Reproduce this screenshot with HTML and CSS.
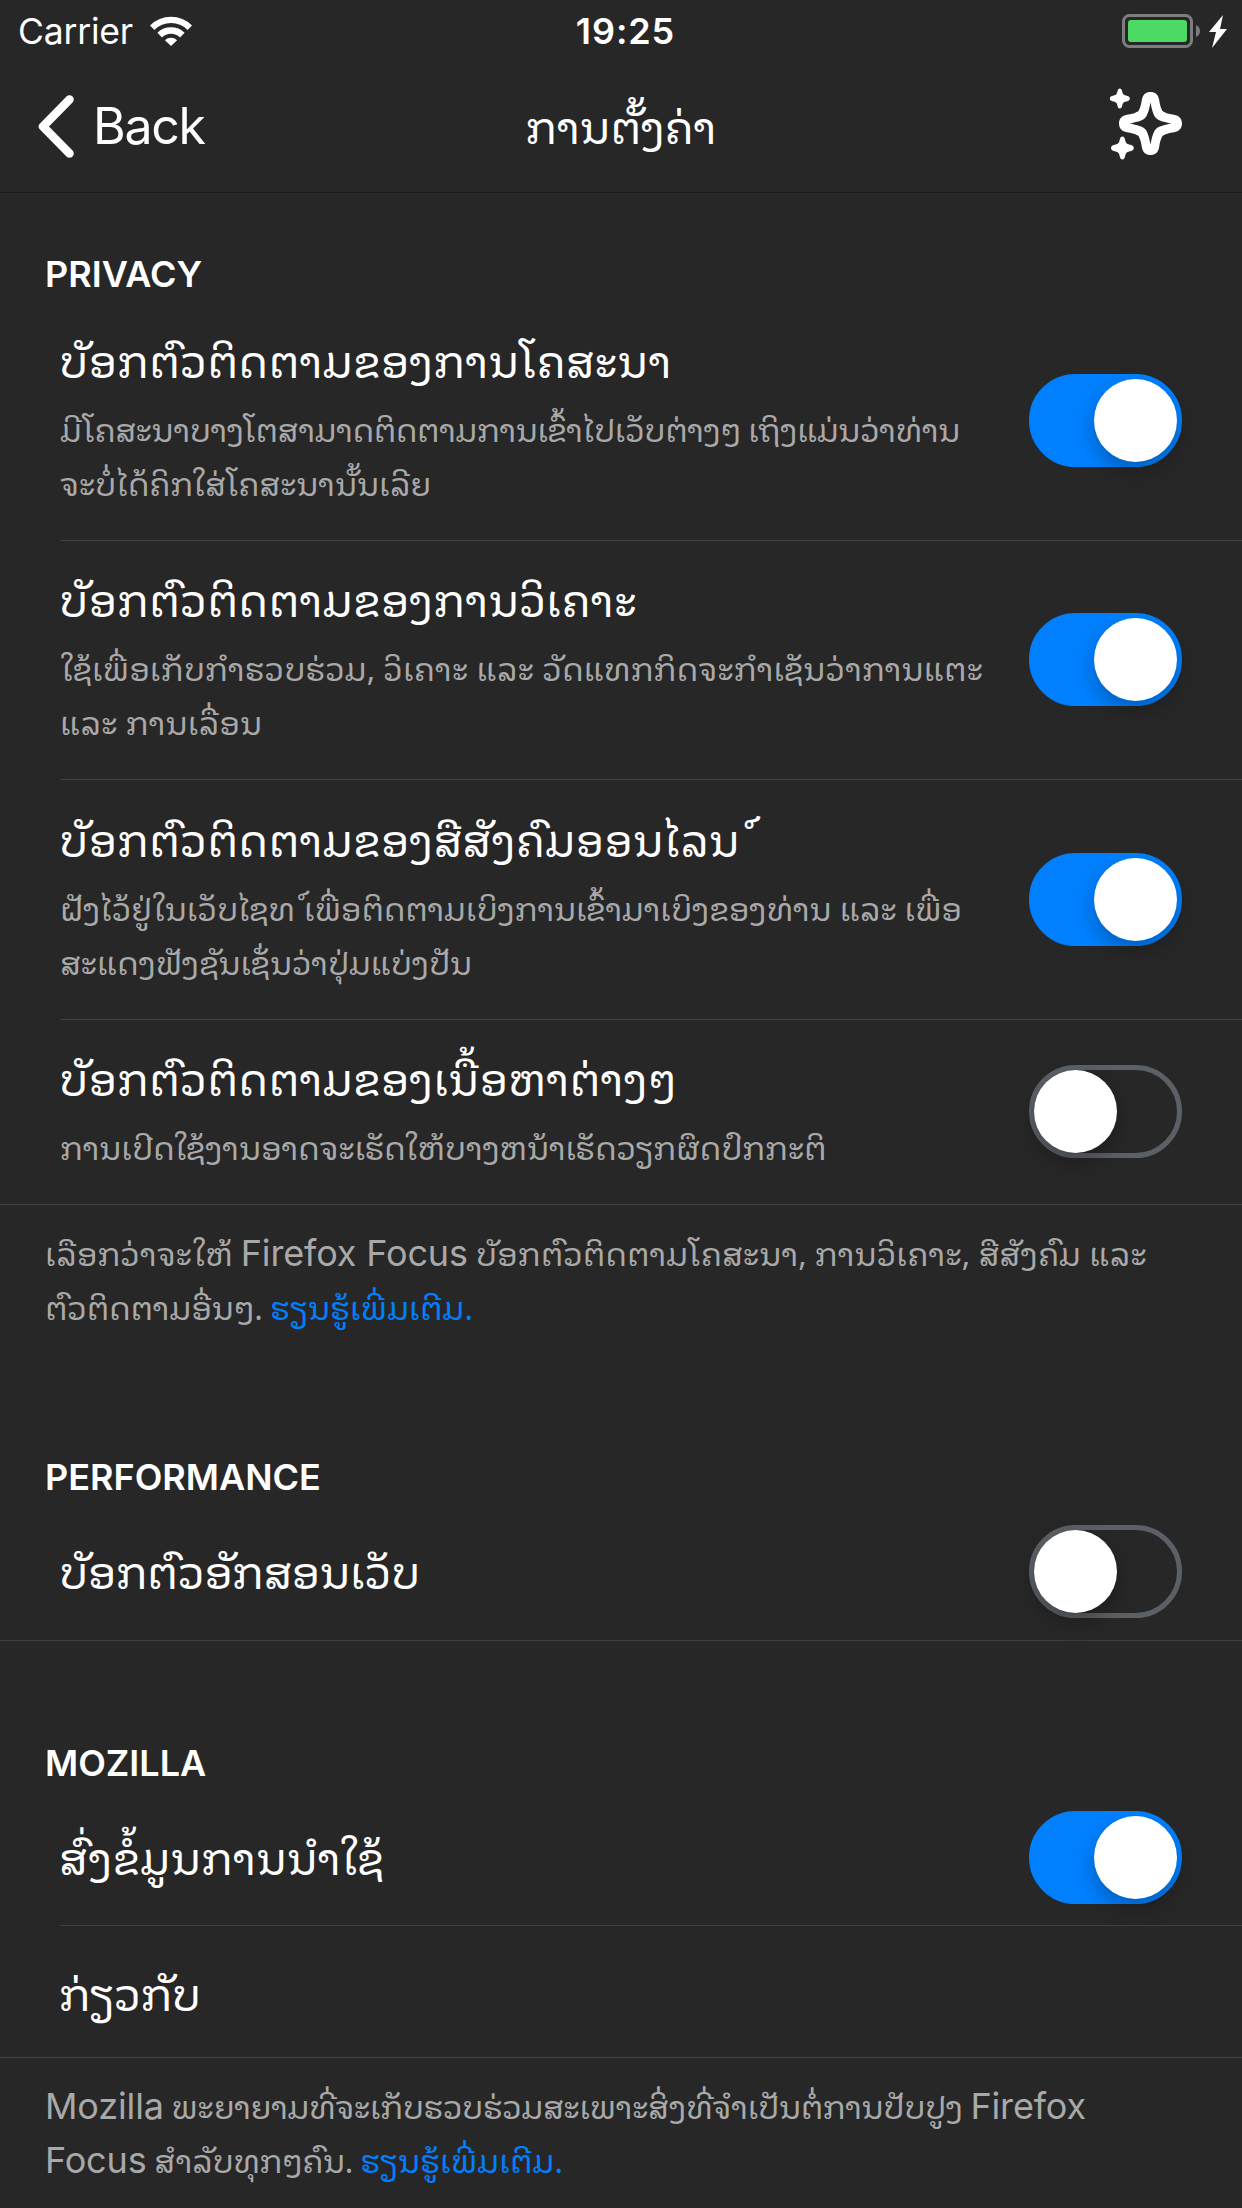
FILE: index.html
```html
<!DOCTYPE html>
<html lang="lo">
<head>
<meta charset="utf-8">
<title>ການຕັ້ງຄ່າ</title>
<link rel="stylesheet" href="styles.css">
</head>
<body>
<header class="top">
  <div class="status">
    <div class="carrier"><span>Carrier</span>
      <svg class="wifi" viewBox="0 0 42 30"><path d="M0 9.400A29.600 29.600 0 0 1 42 9.400L37.600 13.900A23.400 23.400 0 0 0 4.400 13.900Z"/><path d="M7.400 16.800A19.200 19.200 0 0 1 34.600 16.800L30 21.400A12.700 12.700 0 0 0 12 21.400Z"/><path d="M14.900 24.200A8.800 8.800 0 0 1 27.100 24.200L21 30Z"/></svg>
    </div>
    <div class="clock">19:25</div>
    <svg class="battery" viewBox="0 0 106 34"><rect x="1.5" y="1.5" width="68" height="31" rx="6" fill="none" stroke="#7d7d7d" stroke-width="3"/><rect x="6" y="6" width="59" height="22" rx="3" fill="#4cd964"/><path d="M74 11q4 2 4 6t-4 6z" fill="#7d7d7d"/><path d="M101 1 87 18h7l-4 16 15-19h-7z" fill="#fff"/></svg>
  </div>
  <nav class="nav">
    <div class="back"><svg class="chevron" viewBox="0 0 36 63"><path d="M31.500 4.500 5 31.500 31.500 58.500"/></svg><span>Back</span></div>
    <h1 class="nav-title">ການຕັ້ງຄ່າ</h1>
    <svg class="sparkle" viewBox="0 0 75 73">
      <g transform="translate(41.5 35.5)" fill-rule="evenodd"><path d="M0-31.500C4.500-31.500 7.500-29 8.500-24.500C9.500-18 10.500-15 12-12.500C15-10.500 18-9.500 24.500-8.500C29-7.500 31.500-4.500 31.500 0S29 7.500 24.500 8.500C18 9.500 15 10.500 12 12.500C10.500 15 9.500 18 8.500 24.500C7.500 29 4.500 31.500 0 31.500S-7.500 29-8.500 24.500C-9.500 18-10.500 15-12 12.500C-15 10.500-18 9.500-24.500 8.500C-29 7.500-31.500 4.500-31.500 0S-29-7.500-24.500-8.500C-18-9.500-15-10.500-12-12.500C-10.500-15-9.500-18-8.500-24.500C-7.500-29-4.500-31.500 0-31.500ZM0-21C1.500-13 3-8 5.500-5.500C8-3 13-1.500 21 0C13 1.500 8 3 5.500 5.500C3 8 1.500 13 0 21C-1.500 13-3 8-5.500 5.500C-8 3-13 1.500-21 0C-13-1.500-8-3-5.500-5.500C-3-8-1.500-13 0-21Z"/></g>
      <path transform="translate(10.800 10.500)" d="M0-10Q2-10 2.500-6.500Q3-3.500 6-3Q10-2.500 10 0T6 3Q3 3.500 2.500 6.500Q2 10 0 10T-2.500 6.500Q-3 3.500-6 3Q-10 2.500-10 0T-6-3Q-3-3.500-2.500-6.500Q-2-10 0-10Z"/>
      <path transform="translate(13.400 60) scale(1.140)" d="M0-10Q2-10 2.500-6.500Q3-3.500 6-3Q10-2.500 10 0T6 3Q3 3.500 2.500 6.500Q2 10 0 10T-2.500 6.500Q-3 3.500-6 3Q-10 2.500-10 0T-6-3Q-3-3.500-2.500-6.500Q-2-10 0-10Z"/>
    </svg>
  </nav>
</header>
<main>
  <section>
    <h2>PRIVACY</h2>
    <div class="row tall">
      <div class="label">
        <p class="title">ບັອກຕົວຕິດຕາມຂອງການໂຄສະນາ</p>
        <p class="detail tight">ມີໂຄສະນາບາງໂຕສາມາດຕິດຕາມການເຂົ້າໄປເວັບຕ່າງໆ ເຖິງແມ່ນວ່າທ່ານ<br><span class="even">ຈະບໍ່ໄດ້ຄິກໃສ່ໂຄສະນານັ້ນເລີຍ</span></p>
      </div>
      <span class="switch on"></span>
    </div>
    <div class="row tall">
      <div class="label">
        <p class="title">ບັອກຕົວຕິດຕາມຂອງການວິເຄາະ</p>
        <p class="detail loose">ໃຊ້ເພື່ອເກັບກຳຮວບຮ່ວມ, ວິເຄາະ ແລະ ວັດແທກກິດຈະກຳເຊັນວ່າການແຕະ<br>ແລະ ການເລື່ອນ</p>
      </div>
      <span class="switch on"></span>
    </div>
    <div class="row tall">
      <div class="label">
        <p class="title">ບັອກຕົວຕິດຕາມຂອງສືສັງຄົມອອນໄລນ<span class="mark-gap">&nbsp;</span>໌</p>
        <p class="detail">ຝັງໄວ້ຢູ່ໃນເວັບໄຊທ<span class="mark-gap">&nbsp;</span>໌ ເພື່ອຕິດຕາມເບິງການເຂົ້າມາເບິງຂອງທ່ານ ແລະ ເພື່ອ<br>ສະແດງຟັງຊັນເຊັ່ນວ່າປຸ່ມແບ່ງປັນ</p>
      </div>
      <span class="switch on"></span>
    </div>
    <div class="row mid last">
      <div class="label">
        <p class="title">ບັອກຕົວຕິດຕາມຂອງເນື້ອຫາຕ່າງໆ</p>
        <p class="detail">ການເປີດໃຊ້ງານອາດຈະເຮັດໃຫ້ບາງຫນ້າເຮັດວຽກຜຶດປົກກະຕິ</p>
      </div>
      <span class="switch"></span>
    </div>
    <p class="note"><span class="loose">ເລືອກວ່າຈະໃຫ້</span> <span class="latin">Firefox Focus</span> <span class="loose">ບັອກຕົວຕິດຕາມໂຄສະນາ, ການວິເຄາະ, ສືສັງຄົມ ແລະ</span><br>ຕົວຕິດຕາມອື່ນໆ. <a class="loose">ຮຽນຮູ້ເພີ່ມເຕີມ.</a></p>
  </section>
  <section class="performance">
    <h2>PERFORMANCE</h2>
    <div class="row short last">
      <div class="label"><p class="title tight">ບັອກຕົວອັກສອນເວັບ</p></div>
      <span class="switch"></span>
    </div>
  </section>
  <section>
    <h2>MOZILLA</h2>
    <div class="row short">
      <div class="label"><p class="title">ສົ່ງຂໍ້ມູນການນຳໃຊ້</p></div>
      <span class="switch on"></span>
    </div>
    <div class="row plain last">
      <div class="label"><p class="title tight">ກ່ຽວກັບ</p></div>
    </div>
    <p class="note tight"><span class="latin">Mozilla</span> ພະຍາຍາມທີ່ຈະເກັບຮວບຮ່ວມສະເພາະສິ່ງທີ່ຈຳເປັນຕໍ່ການປັບປູງ <span class="latin">Firefox</span><br><span class="latin">Focus</span> ສຳລັບທຸກໆຄົນ. <a class="loose">ຮຽນຮູ້ເພີ່ມເຕີມ.</a></p>
  </section>
</main>
</body>
</html>
```
FILE: styles.css
```css
body {
  margin: 0;
  background: #272727;
  color: #fff;
  font-family: Inter, sans-serif;
}

p, h1, h2 {
  margin: 0;
  font-weight: 400;
}

.top {
  box-sizing: border-box;
  height: 193px;
  border-bottom: 1px solid #1b1b1b;
}

.status {
  display: grid;
  grid-template-columns: 1fr auto 1fr;
  align-items: center;
  height: 61px;
  padding: 0 14px 0 18px;
  font-size: 35.5px;
}

.carrier {
  display: flex;
  align-items: center;
  gap: 17px;
  letter-spacing: -.2px;
}

.carrier span { padding-top: 2px; }

.clock {
  padding: 1px 0 0 5px;
  font-size: 36px;
  font-weight: 600;
  letter-spacing: .9px;
}

.wifi {
  width: 42px;
  height: 30px;
  fill: #fff;
}

.battery {
  width: 106px;
  height: 34px;
  justify-self: end;
}

.nav {
  display: grid;
  grid-template-columns: 1fr auto 1fr;
  align-items: center;
  height: 130px;
  padding: 0 38px;
  font-size: 50px;
}

.back {
  display: flex;
  align-items: center;
  gap: 19px;
  letter-spacing: -.025em;
}

.chevron {
  width: 36px;
  height: 63px;
  fill: none;
  stroke: #fff;
  stroke-width: 8.5;
  stroke-linecap: round;
  stroke-linejoin: round;
}

.nav-title, .title, .detail, .note {
  font-family: "Noto Sans Lao Looped", "DejaVu Sans", sans-serif;
  white-space: nowrap;
}

.nav-title {
  padding-bottom: 5px;
  font-size: 44px;
  line-height: 60px;
  letter-spacing: -.4px;
}

.sparkle {
  width: 75px;
  height: 73px;
  margin: 0 20px 3px 0;
  justify-self: end;
  fill: #fff;
}

h2 {
  padding: 59px 0 5px 45px;
  font-size: 36px;
  font-weight: 600;
  line-height: 44px;
}

.row {
  display: flex;
  align-items: center;
  justify-content: space-between;
  box-sizing: border-box;
  margin-left: 60px;
  padding-right: 60px;
  border-bottom: 1px solid #404042;
}

.row.last {
  margin-left: 0;
  padding-left: 60px;
}

.tall { height: 239.667px; }
.mid { height: 185px; }
.short { height: 136px; }
.short.last { height: 137px; }
.plain { height: 132px; }

.label {
  align-self: flex-start;
  padding-top: 24.500px;
}

.mid .label { padding-top: 24px; }
.short .label, .plain .label { padding-top: 33px; }

.title {
  margin-left: -1px;
  font-size: 44px;
  line-height: 64px;
}

.detail, .note {
  font-size: 32px;
  line-height: 54px;
  letter-spacing: -.35px;
  color: #a9a9a9;
}

.detail { margin-top: 11px; }

.note {
  height: 171px;
  padding: 20px 0 0 45px;
}

.tight { letter-spacing: -.6px; }
.even { letter-spacing: -.35px; }
.loose { letter-spacing: -.15px; }

/* Narrow space that carries the detached cancellation mark */
.mark-gap { margin-right: -.2em; }

.latin {
  font-family: Inter, sans-serif;
  font-size: 36px;
  line-height: 0;
  letter-spacing: -.15px;
}

.performance { height: 286px; }

a { color: #0080ff; }

.switch {
  box-sizing: border-box;
  width: 153px;
  height: 93px;
  border: 5px solid #5b6067;
  border-radius: 47px;
}

.switch::after {
  content: "";
  display: block;
  width: 83px;
  height: 83px;
  border-radius: 50%;
  background: #fff;
  box-shadow: 0 9px 20px #0004;
}

.switch.on {
  border-color: #0080ff;
  background: #0080ff;
}

.switch.on::after { margin-left: 60px; }
```
